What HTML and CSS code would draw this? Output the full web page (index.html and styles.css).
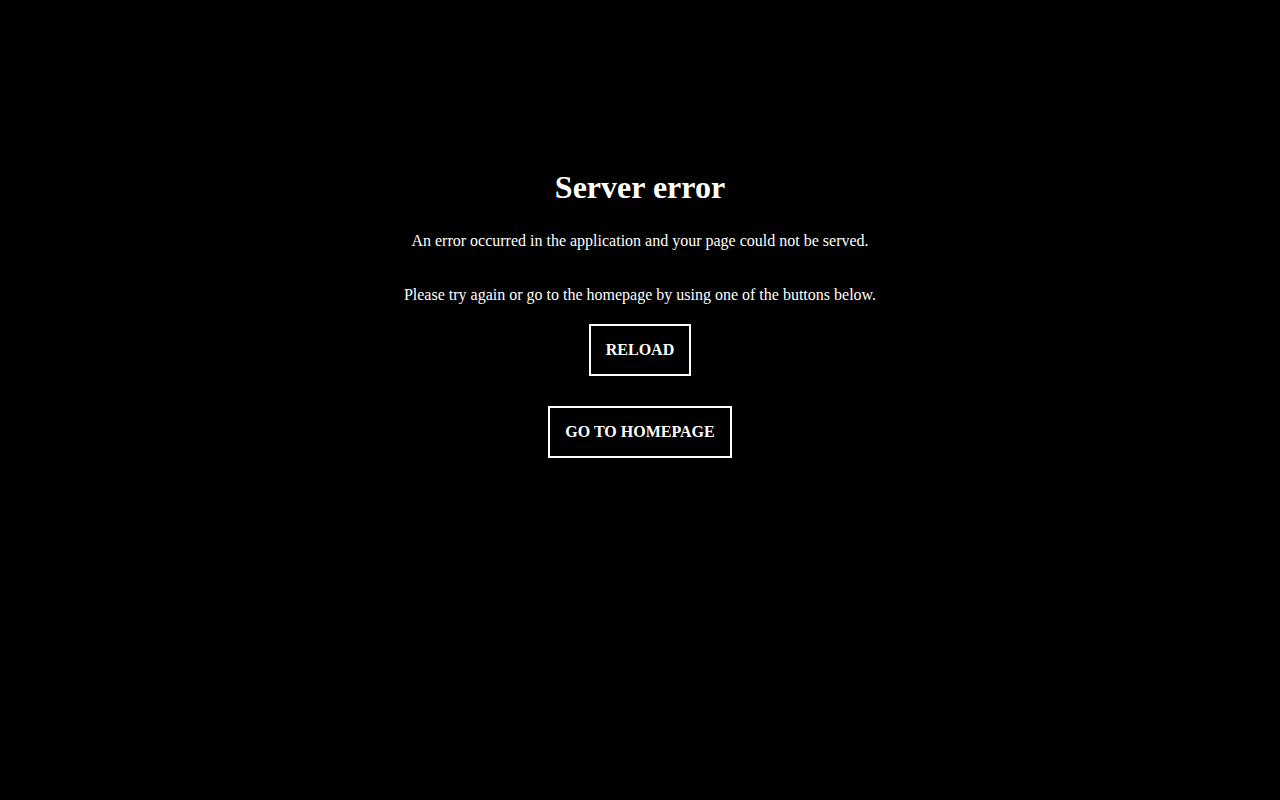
FILE: index.html
```html
<!DOCTYPE html>
<html lang="en">
<head>
<meta charset="utf-8">
<title>Server error</title>
<link rel="stylesheet" href="styles.css">
</head>
<body>
<main class="error">
  <h1 class="error-title">Server error</h1>
  <p class="error-text first">An error occurred in the application and your page could not be served.</p>
  <p class="error-text second">Please try again or go to the homepage by using one of the buttons below.</p>
  <button class="btn reload" type="button">RELOAD</button>
  <button class="btn home" type="button">GO TO HOMEPAGE</button>
</main>
</body>
</html>
```

FILE: styles.css
```css
html, body {
  margin: 0;
  padding: 0;
  background: #000;
}
body {
  color: #fff;
  font-family: "Liberation Serif", "Times New Roman", serif;
  font-size: 16px;
  min-height: 800px;
}
.error {
  display: flex;
  flex-direction: column;
  align-items: center;
  padding-top: 169px;
  text-align: center;
}
.error-title {
  margin: 0 0 26px;
  font-size: 32px;
  font-weight: bold;
}
.error-text {
  margin: 0;
}
.error-text.first {
  margin-bottom: 36px;
}
.error-text.second {
  margin-bottom: 20px;
}
.btn {
  font-family: "Liberation Serif", "Times New Roman", serif;
  font-size: 16px;
  font-weight: bold;
  line-height: 18px;
  color: #fff;
  background: #000;
  border: 2px solid #fff;
  padding: 15px 15px;
  margin: 0;
  cursor: pointer;
}
.btn.reload {
  margin-bottom: 30px;
}
```
